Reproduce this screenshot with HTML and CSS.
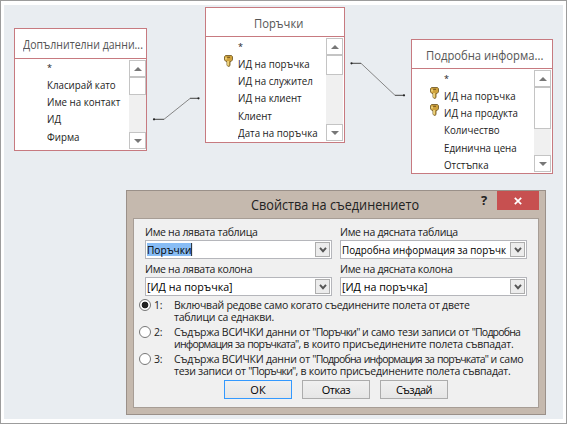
FILE: index.html
```
<!DOCTYPE html>
<html lang="bg">

<head>
    <meta charset="UTF-8" />
    <title>Свойства на съединението</title>
    <link rel="stylesheet" href="styles.css">
</head>

<body>
    <svg class="defs" width="0" height="0">
        <symbol id="key" viewBox="0 0 9 12">
            <path d="M1.5 .5h6l1 1.2v3.2L7 6.6H6v4L4.8 11.6 3 10.4V6.6H2L.5 4.9V1.7z" fill="#cfa23c" stroke="#76602c" stroke-width=".9" />
            <path d="M2 2.4V4.6M4 6v4.4" stroke="#fff0a5" stroke-width="1.2" />
            <path d="M3.2 2.3h2.8" stroke="#705020" stroke-width="1" />
        </symbol>
        <symbol id="up" viewBox="0 0 8 4">
            <path d="M0 4 4 0 8 4z" fill="#777" />
        </symbol>
        <symbol id="down" viewBox="0 0 8 4">
            <path d="M0 0 4 4 8 0z" fill="#777" />
        </symbol>
        <symbol id="chevron" viewBox="0 0 8 6">
            <path d="M1 .8 4 4.2 7 .8" fill="none" stroke="#555" stroke-width="1.9" />
        </symbol>
    </svg>

    <div class="canvas">
        <svg class="joins" width="567" height="424">
            <g fill="none" stroke="#868686">
                <path d="M164 119.3 190 98.5" />
                <path d="M361 63.3 395 95.3" />
            </g>
            <g fill="none" stroke="#444">
                <path d="M154 119.3h10M190 98.3h8M352 63.3h9M395 95.3h9" />
            </g>
            <g fill="#222">
                <circle cx="154" cy="119.3" r="1.1" />
                <circle cx="198.5" cy="98.3" r="1.1" />
                <circle cx="351.5" cy="63.3" r="1.1" />
                <circle cx="404" cy="95.3" r="1.1" />
            </g>
        </svg>

        <div class="table details">
            <div class="table-title"><span>Допълнителни данни...</span></div>
            <div class="table-body">
                <ul class="fields">
                    <li class="star">*</li>
                    <li><span>Класирай като</span></li>
                    <li><span>Име на контакт</span></li>
                    <li><span>ИД</span></li>
                    <li><span>Фирма</span></li>
                </ul>
                <div class="scroll">
                    <span class="scroll-btn"><svg width="8" height="4"><use href="#up" /></svg></span>
                    <span class="thumb"></span>
                    <span class="scroll-btn last"><svg width="8" height="4"><use href="#down" /></svg></span>
                </div>
            </div>
        </div>

        <div class="table orders">
            <div class="table-title"><span>Поръчки</span></div>
            <div class="table-body">
                <ul class="fields">
                    <li class="star">*</li>
                    <li><svg class="key" width="9" height="12"><use href="#key" /></svg><span>ИД на поръчка</span></li>
                    <li><span>ИД на служител</span></li>
                    <li><span>ИД на клиент</span></li>
                    <li><span>Клиент</span></li>
                    <li><span>Дата на поръчка</span></li>
                </ul>
                <div class="scroll">
                    <span class="scroll-btn"><svg width="8" height="4"><use href="#up" /></svg></span>
                    <span class="thumb"></span>
                    <span class="scroll-btn last"><svg width="8" height="4"><use href="#down" /></svg></span>
                </div>
            </div>
        </div>

        <div class="table info">
            <div class="table-title"><span>Подробна информа...</span></div>
            <div class="table-body">
                <ul class="fields">
                    <li class="star">*</li>
                    <li><svg class="key" width="9" height="12"><use href="#key" /></svg><span>ИД на поръчка</span></li>
                    <li><svg class="key" width="9" height="12"><use href="#key" /></svg><span>ИД на продукта</span></li>
                    <li><span>Количество</span></li>
                    <li><span>Единична цена</span></li>
                    <li><span>Отстъпка</span></li>
                </ul>
                <div class="scroll">
                    <span class="scroll-btn"><svg width="8" height="4"><use href="#up" /></svg></span>
                    <span class="thumb"></span>
                    <span class="scroll-btn last"><svg width="8" height="4"><use href="#down" /></svg></span>
                </div>
            </div>
        </div>

        <div class="dialog">
            <div class="titlebar">
                <div class="caption"><span>Свойства на съединението</span></div>
                <span class="help">?</span>
                <span class="close"><svg width="8" height="8" viewBox="0 0 8 8"><path d="M.8 .8 7.2 7.2M7.2 .8 .8 7.2" stroke="#fff" stroke-width="1.7" /></svg></span>
            </div>
            <div class="client">
                <div class="combos">
                    <div class="field">
                        <label>Име на лявата таблица</label>
                        <div class="combo"><div class="value"><mark>Поръчки</mark></div><span class="drop"><svg width="8" height="6"><use href="#chevron" /></svg></span></div>
                    </div>
                    <div class="field">
                        <label>Име на дясната таблица</label>
                        <div class="combo"><div class="value"><span>Подробна информация за поръчк</span></div><span class="drop"><svg width="8" height="6"><use href="#chevron" /></svg></span></div>
                    </div>
                    <div class="field">
                        <label>Име на лявата колона</label>
                        <div class="combo"><div class="value column"><span>[ИД на поръчка]</span></div><span class="drop"><svg width="8" height="6"><use href="#chevron" /></svg></span></div>
                    </div>
                    <div class="field">
                        <label>Име на дясната колона</label>
                        <div class="combo"><div class="value column"><span>[ИД на поръчка]</span></div><span class="drop"><svg width="8" height="6"><use href="#chevron" /></svg></span></div>
                    </div>
                </div>
                <div class="options">
                    <div class="option">
                        <span class="radio checked"></span><span class="num">1:</span>
                        <p>Включвай редове само когато съединените полета от двете<br>таблици са еднакви.</p>
                    </div>
                    <div class="option">
                        <span class="radio"></span><span class="num">2:</span>
                        <p>Съдържа ВСИЧКИ данни от <i>"Поръчки"</i> и само тези записи от <i>"Подробна</i><br><i>информация за поръчката"</i>, в които присъединените полета съвпадат.</p>
                    </div>
                    <div class="option">
                        <span class="radio"></span><span class="num">3:</span>
                        <p>Съдържа ВСИЧКИ данни от <i>"Подробна информация за поръчката"</i> и само<br>тези записи от <i>"Поръчки"</i>, в които присъединените полета съвпадат.</p>
                    </div>
                </div>
                <div class="buttons">
                    <button class="default">ОК</button>
                    <button>Отказ</button>
                    <button>Създай</button>
                </div>
            </div>
        </div>
    </div>
</body>

</html>
```
FILE: styles.css
```
* {
    box-sizing: border-box;
}

body {
    margin: 0;
    width: 567px;
    height: 424px;
    overflow: hidden;
    background: #fff;
    font-family: "Open Sans", "Noto Sans", sans-serif;
    color: #222;
}

.defs {
    position: absolute;
}

.canvas {
    position: relative;
    width: 567px;
    height: 424px;
    border: 1px solid #9c9c9c;
    box-shadow: inset 0 0 0 3px #fff, inset 0 4px 0 #fff, inset 0 -4px 0 #fff;
    background: #e9edf1;
}

.joins {
    position: absolute;
    left: -1px;
    top: -1px;
}

/* table windows */
.table {
    position: absolute;
    display: flex;
    flex-direction: column;
    background: #fff;
    border: 1px solid #c77a80;
}

.details {
    left: 13px;
    top: 27px;
    width: 133px;
    height: 123px;
}

.orders {
    left: 204px;
    top: 6px;
    width: 140px;
    height: 136px;
}

.info {
    left: 410px;
    top: 38px;
    width: 142px;
    height: 135px;
}

.table-title {
    height: 30px;
    border-bottom: 1px solid #c77a80;
    font-size: 13px;
    line-height: 31px;
    color: #555;
    white-space: nowrap;
    padding-left: 8px;
}

/* narrow the text a little, the dialog font is tighter than Open Sans */
.table-title span,
.fields span,
.caption span,
.value span,
.value mark {
    display: inline-block;
    transform-origin: 0 50%;
}

.table-title span {
    transform: scaleX(.865);
}

.details .table-title span {
    transform: scaleX(.81);
}

.orders .table-title {
    height: 29px;
    padding-left: 48px;
}

.info .table-title {
    height: 29px;
    padding-left: 14px;
}

.table-body {
    flex: 1;
    display: flex;
    min-height: 0;
}

.fields {
    flex: 1;
    width: 0;
    margin: 0;
    padding: 0 0 0 32px;
    list-style: none;
    font-size: 11px;
    font-weight: 500;
    line-height: 17.2px;
    white-space: nowrap;
}

.details .fields {
    margin-top: -1px;
}

.fields li {
    height: 17.2px;
    display: flex;
}

.fields span {
    transform: scaleX(.885);
}

.fields .star {
    height: 18px;
    padding-top: 1px;
    font-size: 9px;
}

.key {
    flex: none;
    margin: 0 5px 0 -14px;
}

.scroll {
    flex: none;
    width: 17px;
    margin: 1px 1px 1px 0;
    display: flex;
    flex-direction: column;
    background: #f0f0f0;
}

.details .scroll {
    margin-right: 0;
}

.scroll-btn,
.thumb {
    flex: none;
    height: 17px;
    background: #fff;
    border: 1px solid #c4c4c4;
    display: flex;
    align-items: center;
    justify-content: center;
}

.thumb {
    height: 18px;
}

.orders .thumb {
    height: 20px;
}

.info .thumb {
    height: 42px;
}

.last {
    margin-top: auto;
}

/* join properties dialog */
.dialog {
    position: absolute;
    left: 125px;
    top: 189px;
    width: 420px;
    height: 225px;
    padding: 0 6px 6px;
    background: #c5b9ae;
    border: 1px solid #9a9089;
}

.titlebar {
    height: 27px;
    display: flex;
    justify-content: flex-end;
    font-size: 14px;
}

.caption {
    width: 230px;
    margin-right: auto;
    padding-left: 118px;
    line-height: 27px;
    white-space: nowrap;
}

.caption span {
    transform: scaleX(.905);
}

.help {
    width: 26px;
    font-weight: bold;
    font-size: 13px;
    line-height: 19px;
    text-align: center;
}

.close {
    width: 42px;
    height: 19px;
    background: #c75050;
    display: flex;
    align-items: center;
    justify-content: center;
}

.client {
    height: 190px;
    padding: 6px 10px 0 11px;
    background: #f0f0f0;
    border: 1px solid #a79d95;
}

.combos {
    display: grid;
    grid-template-columns: 187px 187px;
    column-gap: 8px;
    font-size: 11px;
}

.field {
    height: 37px;
}

.field label {
    display: block;
    height: 15px;
    line-height: 14px;
    font-size: 10.5px;
    font-weight: 500;
    letter-spacing: -.3px;
    white-space: nowrap;
}

.combo {
    display: flex;
    height: 19px;
    padding: 1px;
    background: #fff;
    border: 1px solid #b5b6bb;
}

.value {
    flex: 1;
    width: 0;
    line-height: 15px;
    white-space: nowrap;
    color: #000;
}

.value span {
    transform: scaleX(.895);
}

.value mark {
    height: 13px;
    line-height: 13px;
    background: #88bdf5;
    border-right: 1px solid #222;
    transform: scaleX(.92);
}

.column {
    font-size: 11.5px;
}

.value.column span {
    transform: scaleX(.93);
}

.drop {
    flex: none;
    width: 15px;
    height: 15px;
    background: #ececec;
    border: 1px solid #adadad;
    display: flex;
    align-items: center;
    justify-content: center;
}

.options {
    margin: 0 -8px 0 -6px;
    font-size: 10.5px;
    font-weight: 500;
    letter-spacing: -.24px;
}

.option {
    display: flex;
    height: 27px;
    line-height: 12px;
}

.option p {
    margin: 0;
    white-space: nowrap;
}

.option i {
    font-style: normal;
    letter-spacing: -.8px;
    word-spacing: 1px;
}

.radio {
    flex: none;
    width: 12px;
    height: 12px;
    margin-right: 3px;
    background: #fff;
    border: 1px solid #777;
    border-radius: 50%;
}

.checked {
    background: radial-gradient(circle, #222 3px, #fff 3.7px);
}

.num {
    flex: none;
    width: 20px;
}

.buttons {
    display: flex;
    gap: 10px;
    padding-left: 79px;
}

.buttons button {
    width: 68px;
    height: 19px;
    padding: 0;
    font: 11px/15px "Open Sans", "Noto Sans", sans-serif;
    letter-spacing: -.5px;
    color: #000;
    background: linear-gradient(#f0f0f0, #e6e6e6);
    border: 1px solid #acacac;
}

.buttons .default {
    letter-spacing: 0;
    border-color: #3399ff;
}
```
